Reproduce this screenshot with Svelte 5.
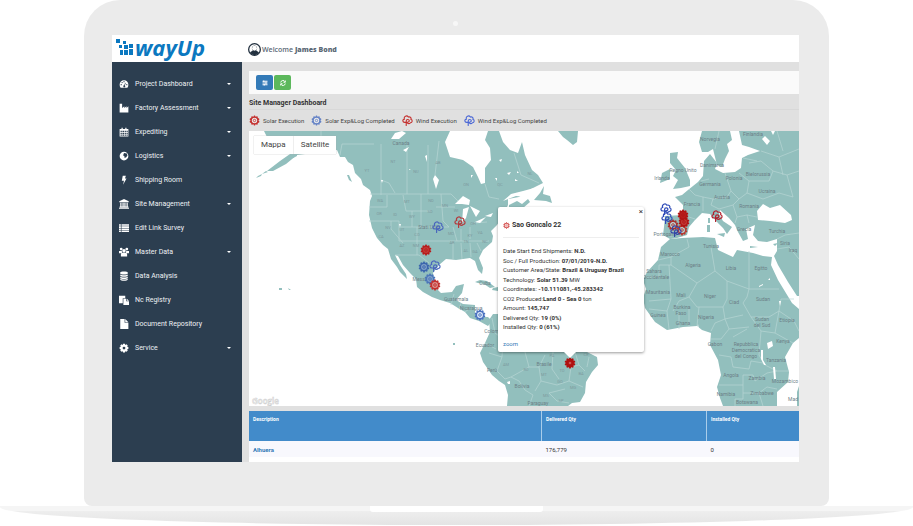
<script>
  const menu = [
    { label: 'Project Dashboard', icon: 'gauge', sub: true },
    { label: 'Factory Assessment', icon: 'factory', sub: true },
    { label: 'Expediting', icon: 'calendar', sub: true },
    { label: 'Logistics', icon: 'globe', sub: true },
    { label: 'Shipping Room', icon: 'bolt' },
    { label: 'Site Management', icon: 'bank', sub: true },
    { label: 'Edit Link Survey', icon: 'list' },
    { label: 'Master Data', icon: 'users', sub: true },
    { label: 'Data Analysis', icon: 'database' },
    { label: 'Nc Registry', icon: 'paste' },
    { label: 'Document Repository', icon: 'file' },
    { label: 'Service', icon: 'cog', sub: true },
  ];

  const icons = {
    gauge: 'M8 2a7 7 0 0 0-7 7c0 2 .6 3.500 1.600 5h10.800c1-1.500 1.600-3 1.600-5a7 7 0 0 0-7-7zM3.500 8a1 1 0 1 1 0 2 1 1 0 0 1 0-2zM5 4.600a1 1 0 1 1 0 2 1 1 0 0 1 0-2zM8 3.200a1 1 0 1 1 0 2 1 1 0 0 1 0-2zM9.800 6l.9.4-1.300 4a1.600 1.600 0 1 1-1-.3zM12.500 8a1 1 0 1 1 0 2 1 1 0 0 1 0-2z',
    factory: 'M1 1h4v7l3.500-3v3L12 5v3l3-3v10H1z',
    calendar: 'M1 3h3V1h2v2h4V1h2v2h3v12H1zM2.500 6v2h2V6zM5.500 6v2H8V6zM9 6v2h2V6zM12 6v2h2V6zM2.500 9v2h2V9zM5.500 9v2H8V9zM9 9v2h2V9zM12 9v2h2V9zM2.500 12v2h2v-2zM5.500 12v2H8v-2zM9 12v2h2v-2zM12 12v2h2v-2z',
    globe: 'M8 1a7 7 0 1 0 0 14A7 7 0 0 0 8 1zM8 3l4.500 1 1 3-2 3-2.500 1-.5-3-2-1z',
    bolt: 'M6 1h5L9.500 5.500H12L6.500 15.500 8 9H4.500z',
    bank: 'M8 0l7.500 3.500V5H.5V3.500zM2 6h2v6h1.500V6h2v6h1V6h2v6H12V6h2v6h1v1.500H1V12h1zM0 14h16v1.500H0z',
    list: 'M0 2h3v2.500H0zM4 2h12v2.500H4zM0 5.300h3v2.500H0zM4 5.300h12v2.500H4zM0 8.600h3v2.500H0zM4 8.600h12v2.500H4zM0 12h3v2.500H0zM4 12h12v2.500H4z',
    users: 'M3.500 1a2.200 2.200 0 1 1 0 4.400 2.200 2.200 0 0 1 0-4.400zM12.500 1a2.200 2.200 0 1 1 0 4.400 2.200 2.200 0 0 1 0-4.400zM8 3a2.800 2.800 0 1 1 0 5.600A2.800 2.800 0 0 1 8 3zM0 6.300h4.500L5 9 3 10H0zM16 6.300h-4.500L11 9l2 1h3zM3 15v-3c0-2 1-3 2.500-3h5c1.500 0 2.500 1 2.500 3v3z',
    database: 'M2 2.500C2 .2 14 .2 14 2.500v1.300c0 2.300-12 2.300-12 0zM2 5.500c1 1.700 11 1.700 12 0v2c0 2.200-12 2.200-12 0zM2 9c1 1.700 11 1.700 12 0v2c0 2.200-12 2.200-12 0zM2 12.500c1 1.700 11 1.700 12 0v1c0 2.600-12 2.600-12 0z',
    paste: 'M0 1h10v4H6v8H0zM7 6h4.500v4H16v6H7zM12.500 6L16 9h-3.500z',
    file: 'M2 0h7v6h6v10H2zM10 0l5 5h-5z',
    cog: 'M6.500 1h3l.5 2 2-1 2 2-1 2 2 .5v3l-2 .5 1 2-2 2-2-1-.5 2h-3L6 13l-2 1-2-2 1-2-2-.5v-3L3 6 2 4l2-2 2 1zM8 5.800a2.200 2.200 0 1 0 0 4.400 2.200 2.200 0 0 0 0-4.400z',
  };

  const RED = '#c4302e';
  const BLUE = '#4a67bd';
  const legend = [
    { label: 'Solar Execution', kind: 'solar', color: RED },
    { label: 'Solar Exp&Log Completed', kind: 'solar', color: '#6583c6' },
    { label: 'Wind Execution', kind: 'wind', color: RED },
    { label: 'Wind Exp&Log Completed', kind: 'wind', color: '#4a67d5' },
  ];

  // map units: the map is 550 x 275
  const pins = [
    { kind: 'wind', x: 189, y: 96, color: BLUE },
    { kind: 'wind', x: 211, y: 91, color: '#b33a3c' },
    { kind: 'solar', x: 177, y: 119, color: '#b81d1d', fill: '#c23a36' },
    { kind: 'solar', x: 175, y: 136, color: '#3c66ad', fill: '#7fa0c8' },
    { kind: 'wind', x: 186, y: 135, color: BLUE },
    { kind: 'solar', x: 181, y: 148, color: '#4b76b8', fill: '#7fa0c8' },
    { kind: 'solar', x: 186, y: 154, color: RED, fill: '#d88f8b' },
    { kind: 'solar', x: 231, y: 184, color: '#4a71c0', fill: '#dbe6f7' },
    { kind: 'wind', x: 417, y: 78, color: '#2e4bb8' },
    { kind: 'wind', x: 418, y: 87, color: '#2e4bb8' },
    { kind: 'solar', x: 424, y: 94, color: '#a8312f' },
    { kind: 'solar', x: 433, y: 99, color: '#b8392f' },
    { kind: 'solar', x: 435, y: 91, color: '#b01515', fill: '#c23a36' },
    { kind: 'solar', x: 434, y: 84, color: '#b01515', fill: '#b81d1d' },
    { kind: 'wind', x: 427, y: 100, color: '#3344a6' },
    { kind: 'wind', x: 468, y: 85, color: '#b3202c' },
    { kind: 'solar', x: 321, y: 232, color: '#b01010', fill: '#b01010' },
  ];

  const places = [
    ['Canada', 152, 14], ['Stati Uniti', 180, 98], ['Messico', 173, 150], ['Cuba', 236, 154],
    ['Guatemala', 207, 170], ['Nicaragua', 222, 179], ['Colombia', 246, 202], ['Ecuador', 236, 216],
    ['Perù', 243, 241], ['Bolivia', 273, 257], ['Brasile', 295, 235], ['Paraguay', 289, 274],
    ['Norvegia', 461, 10], ['Finlandia', 504, 5], ['Danimarca', 463, 36], ['Regno Unito', 434, 41],
    ['Irlanda', 413, 49], ['Germania', 461, 55], ['Polonia', 485, 49], ['Bielorussia', 509, 45],
    ['Ucraina', 518, 62], ['Austria', 473, 68], ['Francia', 443, 75], ['Romania', 500, 77],
    ['Portogallo', 416, 105], ['Grecia', 495, 100], ['Turchia', 528, 102], ['Tunisia', 462, 117],
    ['Marocco', 421, 125], ['Algeria', 444, 136], ['Libia', 482, 139], ['Egitto', 512, 139],
    ['Siria', 536, 114], ['Iraq', 544, 121], ['Sahara', 405, 142], ['Occidentale', 407, 148],
    ['Mauritania', 409, 163], ['Mali', 432, 166], ['Niger', 461, 167], ['Ciad', 485, 173],
    ['Sudan', 514, 170], ['Burkina', 433, 178], ['Faso', 432, 184], ['Guinea', 409, 186],
    ['Ghana', 434, 194], ['Nigeria', 457, 188], ['Sudan', 513, 190], ['del Sud', 513, 196],
    ['Etiopia', 538, 191], ['Gabon', 466, 215], ['Repubblica', 497, 215], ['Democratica', 497, 221],
    ['del Congo', 497, 227], ['Kenya', 534, 212], ['Tanzania', 527, 231], ['Angola', 482, 246],
    ['Zambia', 508, 249], ['Mozambico', 536, 252], ['Namibia', 477, 265], ['Zimbabwe', 513, 264],
    ['Botswana', 498, 273], ['Mad', 544, 270],
  ];

  const states = [
    ['YT', 118, 41], ['NT', 144, 32], ['NU', 167, 42], ['AB', 189, 33], ['ON', 217, 55], ['QC', 251, 55], ['NL', 281, 44],
    ['WA', 131, 71], ['MT', 158, 72], ['ND', 182, 71], ['OR', 130, 84], ['ID', 146, 85], ['WY', 163, 87], ['SD', 181, 82],
    ['NV', 139, 98], ['UT', 153, 100], ['CO', 168, 105], ['CA', 132, 107], ['AZ', 153, 116], ['NM', 167, 116], ['MN', 196, 76],
    ['WI', 207, 81], ['MO', 202, 104], ['TN', 217, 112], ['NC', 236, 112], ['KY', 221, 106], ['VA', 231, 103], ['OH', 224, 94],
    ['AR', 203, 113], ['GA', 226, 122], ['AL', 217, 121], ['AM', 257, 235], ['RO', 277, 240], ['MT', 295, 245], ['PA', 303, 226],
    ['TO', 313, 241], ['BA', 332, 244], ['CE', 337, 225], ['GO', 311, 252], ['MG', 324, 258], ['SP', 312, 271], ['MS', 297, 266],
  ];

  const land = [
    // North and Central America
    'M15 0L18 6 14 11 20 18 41 23 31 30 18 40 24 40 37 33 48 24 88 19 91 26 96 26 99 31 104 34 106 42 112 48 114 54 121 59 123 65 121 70 120 84 123 97 128 107 134 114 139 118 142 128 148 136 151 141 158 148 157 143 151 134 146 124 149 125 154 134 161 142 167 148 168 156 174 161 183 166 191 169 201 172 209 177 216 181 221 187 230 190 239 195 243 190 239 186 232 186 226 182 226 174 214 173 207 169 213 162 215 153 207 155 203 161 192 162 186 156 184 142 190 134 197 128 207 129 221 127 226 130 229 139 233 143 234 137 230 127 234 119 243 111 244 105 242 100 248 94 252 88 259 74 259 68 270 66 282 58 294 52 289 44 283 39 276 24 273 11 269 22 261 19 254 11 250 0 239 0 236 9 241 17 242 29 236 37 236 52 232 53 229 46 224 36 214 29 201 26 196 11 201 0z',
    // Nova Scotia, Newfoundland
    'M260 74L268 70 273 73 279 68 281 71 274 77 260 78zM285 69L291 62 295 55 294 63 301 65 303 72 297 70z',
    // Greenland
    'M309 0L314 6 318 9 324 14 328 11 329 0z',
    // small islands
    'M7 47l5-2 1-2-4 2zM13 43l4-3 2 1zM44 27l4-2 0-3-4 3zM98 44l2 0 3 7-3-2zM30 157h3v2h-3zM39 157l3 2-2 0zM226 151L231 149 238 150 246 156 241 157 235 153 229 152zM244 157l5-1 0 4-6-1zM204 212l2 0 0 2-2 0z',
    // South America
    'M244 183L240 189 241 201 236 212 231 222 234 231 243 244 250 250 256 254 259 264 258 275H319L323 272 331 271 336 262 337 251 343 241 349 234 348 226 338 221 320 215 300 190 260 183z',
    // Great Britain, Ireland
    'M421 22L429 21 428 27 436 37 441 49 441 55 432 57 424 58 429 49 424 45 427 39 421 32zM413 42L421 38 421 48 411 52z',
    // Scandinavia
    'M453 0L450 11 453 21 459 21 464 18 468 34 473 36 476 28 480 20 478 13 483 9 481 0z',
    // Europe, the Near East
    'M490 0L493 14 500 16 511 20 499 24 493 27 492 37 486 41 474 42 466 38 468 32 461 23 455 30 454 45 449 51 439 59 433 64 426 66 434 74 434 84 416 85 415 96 414 104 421 108 428 107 438 104 440 96 446 89 453 82 461 83 468 91 474 97 478 103 483 96 474 90 470 83 471 79 480 87 486 94 489 101 494 110 499 108 497 98 506 94 504 104 509 110 518 111 528 108 528 120 525 125 529 134 539 151 548 165 550 165V0z',
    // Africa
    'M421 108L412 116 409 129 398 141 394 149 397 158 394 167 396 177 406 191 418 199 434 196 448 195 453 199 462 202 461 214 469 229 472 244 468 256 471 267 474 275H528L528 261 539 251 540 241 536 226 544 212 550 207V178L543 172 529 149 522 134 523 126 514 125 504 122 488 119 484 126 469 119 466 107 454 106 433 107z',
    // Corsica, Sardinia, Sicily, Crete, Cyprus, Madagascar
    'M459 87h2v5h-2zM458 94h3v7h-3zM468 103l8-1-1 4zM501 115l8 1-8 1zM524 113l5-1-3 3zM550 255l-2 6 0 14h2z',
  ];

  const water = [
    'M206 73L214 65 221 69 220 74 213 73zM214 78L220 76 217 87 213 92zM221 75L231 80 227 86zM226 91L237 86 231 92zM236 85l8-3-2 4z',
    'M142 8L146 2 153 0 157 2 150 8zM186 44L190 49 187 58 184 48zM154 19l6-3-3 5zM176 25l2-1 0 7zM254 70L262 63 274 60 285 57 276 66 267 65z',
    'M509 89L508 80 514 73 521 77 531 74 542 84 543 89 536 92 521 90zM513 8l3-3 5 5-3 4zM522 0l4 0-2 4zM518 212l5-2 1 5-5 3zM512 219l2 0 0 10 3 5-2 0-3-6zM524 236l2 0 1 12-2 0z',
    'M258 251l3-1 0 3-2 0zM510 155l4-2 0 1-4 2zM519 149l2-2 0 2zM448 199l1-6 1 6zM530 170l2 0-1 5z',
    'M209 24l2 0 0 2zM250 29l3-1-1 3zM258 42l4-1-2 3zM246 47l2 0 0 3zM266 48l3 2-3 0zM268 40l2 2-2 0zM222 44l2 0-2 3zM160 38l2 1-2 0zM132 49l2 0-1 3zM150 93l2 0-1 3z',
  ];

  const borders = [
    'M72 0V18M93 13H125M132 13V64M158 14V63M179 14V63M93 13L91 24M121 63H202L209 70M132 49L140 52 146 62M138 64V76M120 76H138M154 64L157 80H182M172 63V96M120 90H150M142 90V98L154 112M150 90V110M150 96H200M163 80V96M168 96V124M150 110H204M192 63L194 90 200 96M187 76H206M146 124L160 124 170 124 180 132M204 96L208 110M204 110H240M212 98V110M221 96V108M212 112L213 128M221 112L222 126M204 112V128M228 112L232 120M225 92L238 91M190 10L186 44M236 53L240 66 250 68M265 22L272 44 290 52',
    'M205 163L202 174M212 172L210 178M224 175L216 181M231 183L228 188M243 187L246 202 254 208 253 226 240 222M236 212L247 218M253 226L248 240 256 248 262 246 270 250 276 259 284 264 280 275M262 246L280 236 290 236 296 224M290 236L292 250 286 260M276 221L280 236M304 221L303 238 310 248M292 250L308 254 320 250 322 236M322 236L330 234 336 240M320 250L334 256M326 221L330 234M340 226L338 236M300 262L316 258M300 262L308 270 320 272',
    'M434 84L446 88M440 58L446 64 454 66 454 80M452 50L460 48M454 66L464 68 478 66 482 60 476 42M464 68L462 74 470 78 484 74 490 68 482 60M490 42L500 50 498 62 490 68M500 50L520 50 524 40 512 30 500 32M498 62L514 68 530 62 544 66M524 40L538 44 550 40M484 74L488 86 498 84 508 86M488 86L486 92M498 84L500 92M528 108L536 104 550 102M528 118L540 116 550 128M512 20L530 26 550 18M424 88L422 106M494 27L508 30M530 26L534 44M470 0L466 18M528 0L534 20M538 44L544 66',
    'M438 108L440 116 422 126 409 129M422 126V134L448 152 466 140 462 116M466 140L478 150 500 158V120M422 134H410V146H397M420 134L422 168 400 170M448 152L440 166 430 170 424 180M422 168L418 180M478 150V168L474 176H448L440 166M500 158L498 166 494 172 502 186 520 186 530 180 532 168H545M500 158H530M400 178L418 180 420 198M430 198V182M440 196V178M448 195L450 176M474 176L476 188 466 192 462 200M476 188L494 184M476 188L480 198 500 196M462 208H472L480 198M502 186L512 200 526 202 530 180M526 202L544 212M512 200L510 224 516 234 528 240H540M470 224L482 226 484 236 500 238 502 230 514 232M470 254H494V244H504L506 250 518 242 528 240M494 254V268H486V275M494 262H510L518 256 528 258M510 262L514 275M530 180L545 190 550 200M484 206L498 198',
  ];

  const details = [
    ['Date Start End Shipments: ', 'N.D.', ''],
    ['Soc / Full Production: ', '07/01/2019-N.D.', ''],
    ['Customer Area/State: ', 'Brazil & Uruguay Brazil', ''],
    ['Technology: ', 'Solar 51.39', ' MW'],
    ['Coordinates: ', '-10.111081,-45.283342', ''],
    ['CO2 Produced:', 'Land 0 - Sea 0', ' ton'],
    ['Amount: ', '145,747', ''],
    ['Delivered Qty: ', '19 (0%)', ''],
    ['Installed Qty: ', '0 (61%)', ''],
  ];

  const teeth = [0, 36, 72, 108, 144, 180, 216, 252, 288, 324];

  let open = $state(true);
  let mapType = $state('Mappa');
</script>

{#snippet marker(kind, color, fill)}
  {#if kind === 'solar'}
    {#each teeth as a}
      <rect x="-0.9" y="-5.4" width="1.8" height="2" rx="0.5" fill={color} transform="rotate({a})" />
    {/each}
    <circle r="3.700" fill={fill ?? '#ffffff55'} stroke={color} stroke-width="1.500" />
    <circle r="1.300" fill={fill === color ? '#e9aaa6' : 'none'} stroke={color} stroke-width="0.900" />
  {:else}
    <path
      d="M-2 2H-3C-5.600 2-5.800-1.200-3.400-1.500C-4.400-4.600-.6-6.200.9-3.800C3-4.600 4.400-2.600 3.700-1.300C5.800-.6 5.400 2.400 3.200 2.500C2 3.600.6 3.400-.2 2.600M-1.400 5.400V.6C-1.400-1.600 2-1.600 1.900.4C1.800 1.800 0 2-1.200 1.700"
      fill="none" stroke={color} stroke-width="1.200" stroke-linecap="round" />
  {/if}
{/snippet}

<div class="laptop">
  <div class="lid">
    <span class="camera"></span>
    <div class="screen">
      <header>
        <a class="logo" href="#home" aria-label="wayUp">
          <svg viewBox="0 0 17 18" aria-hidden="true">
            <path d="M0 1h4v4H0zM7 3h3v3H7zM3 7h3v3H3zM8 7h4v4H8zM13 6h4v4h-4zM4 12h3v5H4zM8 12h4v5H8zM13 11h4v6h-4z" />
          </svg>
          <span>wayUp</span>
        </a>
        <div class="welcome">
          <svg viewBox="0 0 16 16" aria-hidden="true">
            <circle cx="8" cy="8" r="7.200" fill="#fff" stroke="#22303f" stroke-width="1.600" />
            <path d="M8 3a3.200 3.200 0 0 1 2 5.700c.2 1.300 2.500 1.300 3.500 3.300A7 7 0 0 1 8 15a7 7 0 0 1-5.500-3c1-2 3.300-2 3.500-3.300A3.200 3.200 0 0 1 8 3z" fill="#22303f" />
            <circle cx="8" cy="6.500" r="3" fill="#fff" />
          </svg>
          <span>Welcome <b>James Bond</b></span>
        </div>
      </header>

      <div class="body">
        <nav aria-label="Main">
          {#each menu as item}
            <a href="#{item.icon}">
              <svg viewBox="0 0 16 16" aria-hidden="true"><path d={icons[item.icon]} fill-rule="evenodd" /></svg>
              <span>{item.label}</span>
              {#if item.sub}<i class="caret"></i>{/if}
            </a>
          {/each}
        </nav>

        <main>
          <div class="toolbar">
            <button class="btn filter" type="button" aria-label="Filters">
              <svg viewBox="0 0 12 12"><path d="M1 2.500H11M1 6H11M1 9.500H11M3.500 1v3M8 4.500v3M4.500 8v3" /></svg>
            </button>
            <button class="btn refresh" type="button" aria-label="Refresh">
              <svg viewBox="0 0 12 12"><path d="M1.500 5A4.500 4.500 0 0 1 10 3.500M10.500 1v3.500H7M10.500 7A4.500 4.500 0 0 1 2 8.500M1.500 11V7.500H5" /></svg>
            </button>
          </div>

          <h1>Site Manager Dashboard</h1>

          <ul class="legend">
            {#each legend as l}
              <li>
                <svg viewBox="-6 -6 12 12" aria-hidden="true">{@render marker(l.kind, l.color)}</svg>
                {l.label}
              </li>
            {/each}
          </ul>

          <div class="map">
            <svg class="world" viewBox="0 0 550 275" role="img" aria-label="Map of sites">
              {#each land as d}<path class="land" {d} />{/each}
              {#each borders as d}<path class="border" {d} />{/each}
              {#each water as d}<path class="water" {d} />{/each}
              {#each states as [name, x, y]}<text class="state" {x} {y}>{name}</text>{/each}
              {#each places as [name, x, y]}<text class="place" {x} {y}>{name}</text>{/each}
              {#each pins as p}
                <g transform="translate({p.x} {p.y})">{@render marker(p.kind, p.color, p.fill)}</g>
              {/each}
              <text class="google" x="3" y="273">Google</text>
            </svg>

            <div class="map-type" role="group" aria-label="Map type">
              {#each ['Mappa', 'Satellite'] as t}
                <button type="button" aria-pressed={mapType === t} onclick={() => (mapType = t)}>{t}</button>
              {/each}
            </div>

            {#if open}
              <div class="popup" style="left: {(249 / 550) * 100}%; bottom: {(54 / 275) * 100}%">
                <button class="close" type="button" aria-label="Close" onclick={() => (open = false)}>×</button>
                <h2>
                  <svg viewBox="-6 -6 12 12" aria-hidden="true">{@render marker('solar', '#d04240')}</svg>
                  Sao Goncalo 22
                </h2>
                <div class="details">
                  {#each details as [k, v, unit]}
                    <p>{k}<b>{v}</b>{unit}</p>
                  {/each}
                </div>
                <a href="#zoom">zoom</a>
              </div>
            {/if}
          </div>

          <table>
            <thead>
              <tr><th class="desc">Description</th><th class="qty">Delivered Qty</th><th>Installed Qty</th></tr>
            </thead>
            <tbody>
              <tr><td><a href="#site">Alhuera</a></td><td>176,779</td><td>0</td></tr>
            </tbody>
          </table>
        </main>
      </div>
    </div>
  </div>
  <div class="base"><span class="notch"></span></div>
</div>

<style>
  :global(body) { margin: 0; background: #fff; }
  .laptop { font-family: Roboto, "Liberation Sans", sans-serif; color: #333; }
  .lid {
    position: relative; box-sizing: border-box;
    margin: 0 84px; padding: 35px 30px 44px 28px;
    background: #ebebeb; border-radius: 36px 36px 8px 8px;
  }
  .camera {
    position: absolute; top: 21px; left: 50%; width: 5px; height: 5px;
    margin-left: -4px; border-radius: 50%; background: #f7f7f7;
  }
  .screen { background: #fff; }

  header { display: flex; align-items: center; height: 27px; }
  .logo {
    display: flex; align-items: center; gap: 2px; box-sizing: border-box;
    width: 136px; padding: 0 0 3px 4px; text-decoration: none; color: #0b78c0;
  }
  .logo svg { width: 17px; height: 18px; fill: #0b78c0; }
  .logo span { font: italic 700 22px/24px "Open Sans", sans-serif; }
  .welcome {
    display: flex; align-items: center; gap: 1px; padding-top: 2px;
    font: 600 7px/12px "Open Sans", sans-serif; color: #5b6976;
  }
  .welcome svg { width: 13px; height: 13px; }

  .body { display: flex; }
  nav { flex: none; width: 130px; box-sizing: border-box; padding-top: 10px; background: #2c3e50; }
  nav a {
    display: flex; align-items: center; height: 24px; padding: 0 11px 0 7px;
    font-size: 7px; color: #eef1f4; text-decoration: none;
  }
  nav svg { width: 10px; height: 10px; margin-right: 6px; fill: #fff; }
  nav span { flex: 1; }
  .caret { border: 2px solid transparent; border-top-color: #fff; border-bottom: 0; }

  main { flex: 1; min-width: 0; padding: 9px 0 0 7px; background: #e0e0e0; }
  .toolbar { display: flex; gap: 1px; padding: 4px 7px; background: #fafafa; }
  .btn {
    display: flex; align-items: center; justify-content: center;
    width: 17px; height: 15px; padding: 0; border: 0; border-radius: 2px;
  }
  .btn svg { width: 6px; height: 6px; fill: none; stroke: #fff; stroke-width: 2; }
  .filter { background: #337ab7; }
  .refresh { background: #5cb85c; }
  h1 { margin: 0; padding-top: 3px; font-size: 7px; line-height: 12px; font-weight: 700; border-bottom: 1px solid #d8d8d8; }

  .legend { display: flex; gap: 7px; margin: 0; padding: 0; list-style: none; font-size: 6px; line-height: 21px; color: #444; }
  .legend li { display: flex; align-items: center; gap: 3px; white-space: nowrap; }
  .legend svg { width: 11px; height: 11px; }

  .map { position: relative; background: #fff; }
  .world { display: block; width: 100%; }
  .land { fill: #92bfbd; }
  .water { fill: #fff; }
  .border { fill: none; stroke: #b7d6d4; stroke-width: 0.7; }
  .place, .state { text-anchor: middle; fill: #6c8087; }
  .place { font-size: 5px; }
  .state { font-size: 4px; fill: #7d9a9d; }
  .google { font: 600 8px "Open Sans", sans-serif; fill: #fff; stroke: #ccc; stroke-width: 0.5; }

  .map-type { position: absolute; top: 5px; left: 5px; display: flex; gap: 1px; background: #eee; box-shadow: 0 0 1px #aaa; }
  .map-type button {
    height: 18px; padding: 0 7px; border: 0; background: #fff;
    font: 8px/18px Roboto, sans-serif; color: #444;
  }

  .popup {
    position: absolute; display: flex; flex-direction: column; box-sizing: border-box;
    width: 146px; height: 145px; padding: 13px 5px 4px; background: #fff;
    border-radius: 2px; box-shadow: 0 1px 3px #0006; font-size: 6px; line-height: 9px;
  }
  .popup::after {
    content: ''; position: absolute; bottom: -6px; left: 66px;
    border: 6px solid transparent; border-top-color: #fff; border-bottom: 0;
  }
  .popup h2 {
    display: flex; align-items: center; gap: 2px; margin: 0 0 8px; padding-bottom: 7px;
    font-size: 7px; line-height: 10px; border-bottom: 1px solid #eee;
  }
  .popup h2 svg { width: 7px; height: 7px; }
  .details { flex: 1; display: flex; flex-direction: column; justify-content: space-between; margin-bottom: 8px; }
  .popup p { margin: 0; white-space: nowrap; }
  .popup a, td a { color: #337ab7; text-decoration: none; }
  .close {
    position: absolute; top: 0; right: 1px; padding: 0; border: 0; background: none;
    font: 8px/9px Roboto, sans-serif; color: #333;
  }

  table { width: 100%; margin-top: 5px; border-collapse: collapse; table-layout: fixed; background: #fff; border-bottom: 5px solid #fff; }
  th { height: 23px; padding: 4px 4px 3px; vertical-align: top; text-align: left; font-size: 5px; line-height: 8px; color: #fff; background: #428bca; }
  th + th { border-left: 1px solid #a9cdea; }
  th.desc { width: 284px; }
  th.qty { width: 156px; }
  td { height: 16px; padding: 0 4px; font-size: 6px; background: #f8f8fd; border-bottom: 1px solid #e8f3fa; }
  td a { font-weight: 700; }

  .base {
    height: 19px; background: linear-gradient(#f5f5f5 0 5px, #eee 5px, #e4e4e4);
    border-radius: 0 0 50% 50% / 0 0 18px 18px;
  }
  .notch { display: block; width: 173px; height: 6px; margin: 0 auto; background: #fff; border-radius: 0 0 3px 3px; }
</style>
